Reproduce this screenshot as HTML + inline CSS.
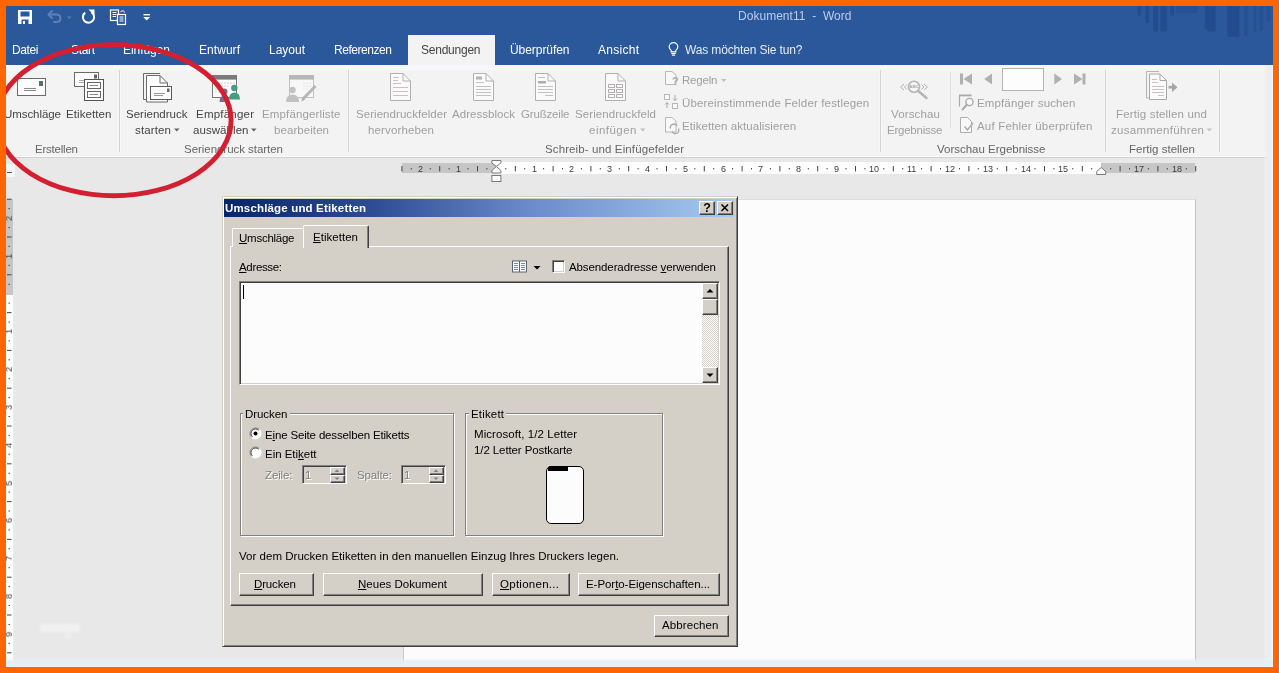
<!DOCTYPE html>
<html lang="de">
<head>
<meta charset="utf-8">
<title>Dokument11 - Word</title>
<style>
*{box-sizing:border-box;margin:0;padding:0}
html,body{width:1279px;height:673px;overflow:hidden}
body{position:relative;background:#e8e8e8;font-family:"Liberation Sans",sans-serif;}
.a{position:absolute}
.t{position:absolute;white-space:nowrap;will-change:transform;line-height:20px;height:20px;font-family:"Liberation Sans",sans-serif}
.t u{text-decoration:underline;text-underline-offset:1px}
#hdr{left:0;top:0;width:1279px;height:64.5px;background:#2a589b}
#acttab{left:408px;top:35px;width:86.6px;height:30px;background:#f3f3f3}
#ribbon{left:0;top:64.5px;width:1279px;height:93px;background:linear-gradient(180deg,#f4f8fd 0,#f6f9fc 3.5px,#f4f3f3 6px,#f3f3f3 100%);border-bottom:1px solid #d0d0d0;box-shadow:inset 0 -1px 0 #fbfbfb}
.sep{position:absolute;top:70px;width:1px;height:82px;background:#d3d3d3;box-shadow:1px 0 0 #f8f8f8,-1px 0 0 #f6f6f6}
#page{left:403px;top:199px;width:793px;height:480px;background:#fcfcfc;border-right:1px solid #c4c4c4;border-left:1px solid #c8c8c8;border-top:1px solid #dedede}
/* dialog */
#dlg{left:221.5px;top:196px;width:516.5px;height:450.5px;background:#d4d0c8;border:1px solid;border-color:#d4d0c8 #404040 #404040 #d4d0c8;box-shadow:inset 1px 1px 0 #fff,inset -1px -1px 0 #808080}
#dtitle{left:224px;top:199px;width:509.5px;height:18px;background:linear-gradient(90deg,#0a246a 0%,#2f4e95 30%,#6b8bcb 60%,#a6caf0 100%)}
.tbtn{position:absolute;top:200.5px;width:16px;height:14px;background:#d4d0c8;border:1px solid;border-color:#fff #404040 #404040 #fff;box-shadow:inset -1px -1px 0 #808080;font-weight:bold;font-size:11px;line-height:11px;text-align:center;color:#000}
.raised{position:absolute;background:#d4d0c8;border:1px solid;border-color:#fff #404040 #404040 #fff;box-shadow:inset -1px -1px 0 #808080}
.sunken{position:absolute;border:1px solid;border-color:#808080 #fff #fff #808080;box-shadow:inset 1px 1px 0 #404040,inset -1px -1px 0 #d4d0c8}
.group{position:absolute;border:1px solid #808080;box-shadow:1px 1px 0 #fff, inset 1px 1px 0 #fff}
.gcap{position:absolute;background:#d4d0c8;height:8px}
#frame{left:0;top:0;width:1279px;height:673px;border:6px solid #ff6600;border-bottom-width:6px;pointer-events:none}
</style>
</head>
<body>
<!-- ===== Word header ===== -->
<div class="a" id="hdr"></div>
<svg class="a" style="left:1130px;top:6px" width="143" height="36" viewBox="1130 6 143 36">
 <g fill="#1c4281" opacity="0.5">
  <rect x="1137.700" y="6" width="3.600" height="9.500"/><rect x="1145.500" y="6" width="3.600" height="17"/><rect x="1153.200" y="6" width="4.800" height="25.500"/><rect x="1160.300" y="6" width="6.600" height="25.500"/><rect x="1170.400" y="6" width="3.600" height="9.500"/>
  <rect x="1176" y="6" width="22" height="7" opacity=".5"/>
  <path d="M1204.900 6 H1215.600 V31.500 H1210 Q1204.900 31.500 1204.900 26 Z"/>
  <rect x="1227.500" y="6" width="12" height="31"/>
  <rect x="1244" y="6" width="3.700" height="29.500" opacity=".7"/><rect x="1253.700" y="6" width="2.600" height="26" opacity=".7"/><rect x="1259.600" y="6" width="3.600" height="25" opacity=".7"/><rect x="1266.700" y="6" width="3.600" height="15.500" opacity=".7"/>
 </g>
</svg>
<div class="a" id="acttab"></div>
<div class="a" id="ribbon"></div>
<!-- ===== Quick access toolbar + bulb ===== -->
<svg class="a" style="left:0;top:0" width="1279" height="65" viewBox="0 0 1279 65">
 <!-- save -->
 <g>
  <path d="M18 10 H32 V24 H18 Z" fill="#fff"/>
  <rect x="20.5" y="11.5" width="9" height="5" fill="#2a589b"/>
  <rect x="21.5" y="19.5" width="7" height="4.5" fill="#2a589b"/>
  <rect x="23" y="21" width="2" height="3" fill="#fff"/>
 </g>
 <!-- undo (disabled) -->
 <g fill="none" stroke="#5f7fb6" stroke-width="2" stroke-linecap="round" stroke-linejoin="round">
  <path d="M48.5 14.5 H56 Q60.5 14.5 60.5 18.5 Q60.5 22 56 22 H54"/>
  <path d="M52 11 L48.5 14.5 L52 18"/>
 </g>
 <path d="M67 16.5 H71.5 L69.25 19 Z" fill="#5f7fb6"/>
 <!-- redo/repeat -->
 <g fill="none" stroke="#fff" stroke-width="2">
  <path d="M91.5 12.4 A5.6 5.6 0 1 1 85.2 12.6"/>
 </g>
 <path d="M88.5 9.5 H94.5 V15.5 Z" fill="#fff"/>
 <!-- docs -->
 <g fill="#2a589b" stroke="#fff" stroke-width="1.2">
  <rect x="110.5" y="10" width="8" height="10.5"/>
  <rect x="117.5" y="14.5" width="8" height="10"/>
 </g>
 <g stroke="#fff" stroke-width="1" fill="none">
  <path d="M112.5 12.5 H116.5 M112.5 14.5 H116.5 M112.5 16.5 H116 M119.5 17 H123.5 M119.5 19 H123.5 M119.5 21 H123.5"/>
  <path d="M120.5 11.5 Q123.5 9.5 125 12.5" />
 </g>
 <!-- dropdown -->
 <rect x="143.5" y="14" width="6.5" height="1.4" fill="#fff"/>
 <path d="M143.2 17 H150.2 L146.7 20.6 Z" fill="#fff"/>
 <!-- bulb -->
 <g fill="none" stroke="#fff" stroke-width="1.2">
  <path d="M671.200 51.800 V50.400 Q669.200 48.600 669.200 46.900 A4.300 4.300 0 0 1 677.800 46.900 Q677.800 48.600 675.800 50.400 V51.800 Z"/>
  <path d="M671.300 53.500 H675.700 M671.900 55.100 H675.100"/>
 </g>
</svg>

<!-- ===== Ribbon icons ===== -->
<svg class="a" style="left:0;top:64px" width="1279" height="94" viewBox="0 64 1279 94">
 <!-- Umschlaege -->
 <g>
  <rect x="17.5" y="78.5" width="28" height="17" fill="#fdfdfd" stroke="#6a6a6a" stroke-width="1"/>
  <rect x="39" y="81" width="4" height="5" fill="#55706a"/>
  <path d="M24 88.5 H36 M24 90.5 H36" stroke="#8a8a8a" stroke-width="1"/>
 </g>
 <!-- Etiketten -->
 <g>
  <rect x="74.5" y="72.5" width="24" height="14" fill="#fdfdfd" stroke="#6a6a6a"/>
  <rect x="94" y="74.5" width="3" height="4" fill="#666"/>
  <path d="M79 80.500 H90 M79 82.500 H88" stroke="#aaa"/>
  <rect x="84.500" y="79.500" width="19" height="21" fill="#fdfdfd" stroke="#555"/>
  <rect x="87.500" y="82.500" width="13" height="6" fill="#fff" stroke="#666"/>
  <rect x="87.500" y="91.500" width="13" height="6" fill="#fff" stroke="#666"/>
  <path d="M89.500 85.500 H98 M89.500 94.500 H98" stroke="#888"/>
 </g>
 <!-- Seriendruck starten -->
 <g>
  <path d="M160 73.500 H143.500 V99.500 H146" fill="none" stroke="#6a6a6a"/>
  <path d="M146.500 75.500 H160 L167.500 83 V102 H146.500 Z" fill="#fdfdfd" stroke="#6a6a6a"/>
  <path d="M160 75.500 V83 H167.500" fill="none" stroke="#6a6a6a"/>
  <rect x="150.500" y="86.500" width="21" height="13" fill="#fdfdfd" stroke="#5a5a5a"/>
  <rect x="167" y="88.500" width="2.500" height="3.500" fill="#666"/>
  <path d="M154 93.500 H165 M154 95.500 H163" stroke="#999"/>
 </g>
 <!-- Empfaenger auswaehlen -->
 <g>
  <rect x="212.500" y="75.500" width="24" height="22" fill="#fdfdfd" stroke="#777"/>
  <rect x="212" y="75" width="25" height="4.600" fill="#7a7a7a"/>
  <g fill="#9a9a9a"><circle cx="216" cy="83" r=".6"/><circle cx="219" cy="83" r=".6"/><circle cx="222" cy="83" r=".6"/><circle cx="225" cy="83" r=".6"/><circle cx="228" cy="83" r=".6"/><circle cx="231" cy="83" r=".6"/><circle cx="234" cy="83" r=".6"/>
  <circle cx="216" cy="86" r=".6"/><circle cx="219" cy="86" r=".6"/><circle cx="222" cy="86" r=".6"/><circle cx="225" cy="86" r=".6"/><circle cx="228" cy="86" r=".6"/>
  <circle cx="216" cy="89" r=".6"/><circle cx="219" cy="89" r=".6"/><circle cx="216" cy="92" r=".6"/><circle cx="219" cy="92" r=".6"/></g>
  <circle cx="224.500" cy="91.500" r="3" fill="#7b6a9a"/>
  <path d="M219.500 102 Q219.500 95.500 224.500 95.500 Q229.500 95.500 229.500 102 Z" fill="#7b6a9a"/>
  <circle cx="234.300" cy="88" r="3.200" fill="#4a9a80"/>
  <path d="M229 99.500 Q229 92.500 234.500 92.500 Q240 92.500 240 99.500 Z" fill="#4a9a80"/>
 </g>
 <!-- Empfaengerliste bearbeiten (disabled) -->
 <g opacity=".8">
  <rect x="289.500" y="75.500" width="24" height="22" fill="#fafafa" stroke="#b4b4b4"/>
  <rect x="289" y="75" width="25" height="4.600" fill="#a9a9a9"/>
  <g fill="#c4c4c4"><circle cx="304" cy="83" r=".6"/><circle cx="307" cy="83" r=".6"/><circle cx="310" cy="83" r=".6"/><circle cx="304" cy="86" r=".6"/><circle cx="307" cy="86" r=".6"/><circle cx="310" cy="86" r=".6"/><circle cx="304" cy="89" r=".6"/><circle cx="307" cy="89" r=".6"/></g>
  <circle cx="292.500" cy="90" r="3.200" fill="#b7b7b7"/>
  <path d="M286 102 Q286 94.500 292.500 94.500 Q299 94.500 299 102 Z" fill="#b7b7b7"/>
  <path d="M302.500 99.500 L315.500 86" stroke="#a8a8a8" stroke-width="3"/>
  <path d="M301 101.500 L303 98 L304.800 99.800 Z" fill="#999"/>
 </g>
 <!-- doc icons (disabled) -->
 <g fill="#fbfafa" stroke="#b0b0b0">
  <path d="M390.500 73.500 H403 L410.500 81 V100.500 H390.500 Z"/><path d="M403 73.500 V81 H410.500" fill="none"/>
  <path d="M473.500 73.500 H486 L493.500 81 V100.500 H473.500 Z"/><path d="M486 73.500 V81 H493.500" fill="none"/>
  <path d="M535.500 73.500 H548 L555.500 81 V100.500 H535.500 Z"/><path d="M548 73.500 V81 H555.500" fill="none"/>
  <path d="M605.500 73.500 H618 L625.500 81 V100.500 H605.500 Z"/><path d="M618 73.500 V81 H625.500" fill="none"/>
 </g>
 <g stroke="#d2bcc6" fill="none">
  <path d="M393 77.500 H399 M393 80.500 H398 M393 83.500 H401 M393 87.500 H408 M393 91.500 H408 M393 95.500 H408"/>
 </g>
 <g stroke="#c4c0c4" fill="none">
  <path d="M476 82.500 H484 M476 86.500 H491 M476 89.500 H491 M476 92.500 H491 M476 95.500 H491"/>
  <path d="M538 77.500 H545 M538 86.500 H553 M538 89.500 H553 M538 92.500 H553 M545 95.500 H553"/>
 </g>
 <rect x="476" y="76.500" width="6" height="3" fill="#b4b4b4"/>
 <rect x="538" y="81" width="8" height="2.500" fill="#adadad"/>
 <g fill="none" stroke="#b4b0b4">
  <rect x="608.500" y="84.500" width="6" height="3"/><rect x="616.500" y="84.500" width="6" height="3"/>
  <rect x="608.500" y="89.500" width="6" height="3"/><rect x="616.500" y="89.500" width="6" height="3"/>
  <rect x="608.500" y="94.500" width="6" height="3"/><rect x="616.500" y="94.500" width="6" height="3"/>
 </g>
 <!-- small icons (disabled) -->
 <g fill="none" stroke="#b8b8b8">
  <path d="M665.500 71.500 H672 L676 75 V84.500 H665.500 Z" fill="#f8f8f8"/>
  <text x="675.200" y="84.600" font-family="Liberation Sans, sans-serif" font-size="10.500" font-weight="bold" text-anchor="middle" fill="#a8a8a8" stroke="none">?</text>
  <rect x="664.500" y="94.500" width="5" height="5" fill="#f8f8f8"/><rect x="672.500" y="103.500" width="5" height="5" fill="#f8f8f8"/>
  <path d="M675 95 V100.500 M673 98.500 L675 100.500 L677 98.500 M667 108 V102.500 M665 104.500 L667 102.500 L669 104.500" stroke="#a8a8a8"/>
  <path d="M665.500 117.500 H672 L676 121 V132 H665.500 Z" fill="#f8f8f8"/>
  <path d="M670.500 128.500 A3.500 3.500 0 0 1 677 126 M678.500 128.500 A3.500 3.500 0 0 1 672 131.500" stroke="#a8a8a8" stroke-width="1.300"/>
 </g>
 <!-- Vorschau Ergebnisse icon -->
 <g fill="none" stroke="#b4b4b4">
  <circle cx="914" cy="86.700" r="5.500" stroke-width="1.600" fill="#f6f6f6"/>
  <text x="914" y="88.300" font-family="Liberation Sans, sans-serif" font-size="4.300" font-weight="bold" text-anchor="middle" fill="#a8a8a8" stroke="none">ABC</text>
  <path d="M918.200 91 L926.500 98" stroke-width="2.400" stroke-linecap="round"/>
  <path d="M904 84 L900.500 87 L904 90 M907 84.500 L904.500 87 L907 89.500 M924 84 L927.500 87 L924 90 M921.500 84.500 L924 87 L921.500 89.500" stroke-width="1"/>
 </g>
 <!-- navigation -->
 <g fill="#b0b0b0">
  <rect x="960" y="73.500" width="3" height="11"/><path d="M972 73.500 V84.500 L963.500 79 Z"/>
  <path d="M992 73.500 V84.500 L984.200 79 Z"/>
  <path d="M1054.300 73.500 V84.500 L1062 79 Z"/>
  <path d="M1074 73.500 V84.500 L1082.500 79 Z"/><rect x="1082.500" y="73.500" width="3" height="11"/>
 </g>
 <rect x="1002.500" y="68.500" width="41" height="22" fill="#fdfdfd" stroke="#b4b4b4"/>
 <!-- Empfaenger suchen icon -->
 <g fill="none" stroke="#aaa">
  <path d="M959.500 106.500 V95.500 H971" stroke-width="1.200"/>
  <rect x="959" y="94.500" width="12.500" height="1.800" fill="#aaa" stroke="none"/>
  <circle cx="969.500" cy="102" r="3.600" stroke-width="1.400" fill="#f8f8f8"/>
  <path d="M966.800 104.800 L962.500 109.500" stroke-width="2" stroke-linecap="round"/>
 </g>
 <!-- Auf Fehler ueberpruefen icon -->
 <g fill="none" stroke="#aeaeae">
  <path d="M960.500 117.500 H967.500 L971.500 121.500 V132.500 H960.500 Z" fill="#f8f8f8"/>
  <path d="M964.500 126.500 L967.300 130 L973 123" stroke-width="1.500"/>
 </g>
 <!-- Fertig stellen icon -->
 <g>
  <path d="M1159 71.500 H1146.500 V98 H1149" fill="none" stroke="#b4b4b4"/>
  <path d="M1149.500 74 H1160 L1166.500 80.500 V99.500 H1149.500 Z" fill="#fbfafa" stroke="#a8a8a8"/>
  <path d="M1160 74 V80.500 H1166.500" fill="none" stroke="#a8a8a8"/>
  <path d="M1152 79.500 H1157 M1152 82.500 H1158 M1152 86.500 H1164 M1152 89.500 H1164 M1152 92.500 H1164 M1158 95.500 H1164" stroke="#d2bcc6" fill="none"/>
  <path d="M1168.500 87.200 H1175" stroke="#a6a6a6" stroke-width="2.600"/>
  <path d="M1172 82.500 L1177.500 87.200 L1172 92 Z" fill="#a6a6a6"/>
 </g>
 <!-- dropdown arrows -->
 <g fill="#666">
  <path d="M174 128.500 H179.600 L176.800 131.500 Z"/>
  <path d="M251 128.500 H256.600 L253.800 131.500 Z"/>
 </g>
 <g fill="#c2c2c2">
  <path d="M640 128.500 H645.600 L642.800 131.500 Z"/>
  <path d="M721 79 H726.600 L723.800 82 Z"/>
  <path d="M1206.500 128.500 H1212.100 L1209.300 131.500 Z"/>
 </g>
</svg>

<div class="sep" style="left:119px"></div>
<div class="sep" style="left:348px"></div>
<div class="sep" style="left:880px"></div>
<div class="sep" style="left:1105px"></div>
<div class="a" style="left:950px;top:72px;width:1px;height:56px;background:#e0e0e0"></div>
<div class="sep" style="left:1219px"></div>
<!-- ===== Rulers ===== -->
<div class="a" style="left:402px;top:163px;width:94.5px;height:10px;background:#c6c6c6"></div>
<div class="a" style="left:496.4px;top:161.5px;width:604.5px;height:12.5px;background:#fdfdfd"></div>
<div class="a" style="left:1100.9px;top:163px;width:94.5px;height:10px;background:#c6c6c6"></div>
<svg class="a" style="left:0;top:160px" width="1279" height="24" viewBox="0 0 1279 24"><g fill="#444"><rect x="401.4" y="6" width="1" height="5.4"/><rect x="410.8" y="8" width="1" height="1.4"/><rect x="429.8" y="8" width="1" height="1.4"/><rect x="439.2" y="6" width="1" height="5.4"/><rect x="448.6" y="8" width="1" height="1.4"/><rect x="467.5" y="8" width="1" height="1.4"/><rect x="477.0" y="6" width="1" height="5.4"/><rect x="486.4" y="8" width="1" height="1.4"/><rect x="505.3" y="8" width="1" height="1.4"/><rect x="514.8" y="6" width="1" height="5.4"/><rect x="524.2" y="8" width="1" height="1.4"/><rect x="543.1" y="8" width="1" height="1.4"/><rect x="552.6" y="6" width="1" height="5.4"/><rect x="562.0" y="8" width="1" height="1.4"/><rect x="580.9" y="8" width="1" height="1.4"/><rect x="590.4" y="6" width="1" height="5.4"/><rect x="599.8" y="8" width="1" height="1.4"/><rect x="618.8" y="8" width="1" height="1.4"/><rect x="628.2" y="6" width="1" height="5.4"/><rect x="637.6" y="8" width="1" height="1.4"/><rect x="656.5" y="8" width="1" height="1.4"/><rect x="666.0" y="6" width="1" height="5.4"/><rect x="675.4" y="8" width="1" height="1.4"/><rect x="694.3" y="8" width="1" height="1.4"/><rect x="703.8" y="6" width="1" height="5.4"/><rect x="713.2" y="8" width="1" height="1.4"/><rect x="732.1" y="8" width="1" height="1.4"/><rect x="741.6" y="6" width="1" height="5.4"/><rect x="751.0" y="8" width="1" height="1.4"/><rect x="769.9" y="8" width="1" height="1.4"/><rect x="779.4" y="6" width="1" height="5.4"/><rect x="788.8" y="8" width="1" height="1.4"/><rect x="807.8" y="8" width="1" height="1.4"/><rect x="817.2" y="6" width="1" height="5.4"/><rect x="826.6" y="8" width="1" height="1.4"/><rect x="845.5" y="8" width="1" height="1.4"/><rect x="855.0" y="6" width="1" height="5.4"/><rect x="864.4" y="8" width="1" height="1.4"/><rect x="883.3" y="8" width="1" height="1.4"/><rect x="892.8" y="6" width="1" height="5.4"/><rect x="902.2" y="8" width="1" height="1.4"/><rect x="921.1" y="8" width="1" height="1.4"/><rect x="930.6" y="6" width="1" height="5.4"/><rect x="940.0" y="8" width="1" height="1.4"/><rect x="958.9" y="8" width="1" height="1.4"/><rect x="968.4" y="6" width="1" height="5.4"/><rect x="977.8" y="8" width="1" height="1.4"/><rect x="996.8" y="8" width="1" height="1.4"/><rect x="1006.2" y="6" width="1" height="5.4"/><rect x="1015.6" y="8" width="1" height="1.4"/><rect x="1034.5" y="8" width="1" height="1.4"/><rect x="1044.0" y="6" width="1" height="5.4"/><rect x="1053.4" y="8" width="1" height="1.4"/><rect x="1072.3" y="8" width="1" height="1.4"/><rect x="1081.8" y="6" width="1" height="5.4"/><rect x="1091.2" y="8" width="1" height="1.4"/><rect x="1110.2" y="8" width="1" height="1.4"/><rect x="1119.6" y="6" width="1" height="5.4"/><rect x="1129.0" y="8" width="1" height="1.4"/><rect x="1147.9" y="8" width="1" height="1.4"/><rect x="1157.4" y="6" width="1" height="5.4"/><rect x="1166.8" y="8" width="1" height="1.4"/><rect x="1185.8" y="8" width="1" height="1.4"/><rect x="1195.2" y="6" width="1" height="5.4"/></g><g fill="#fcfcfc" stroke="#7a7a7a" stroke-width="1"><path d="M491.9 0.5 L500.9 0.5 L500.9 3 L496.4 6.5 L491.9 3 Z"/><path d="M496.4 6.5 L500.9 10.5 L500.9 13 L491.9 13 L491.9 10.5 Z"/><rect x="491.9" y="15.5" width="9" height="6"/><path d="M1101.2 7.5 L1105.7 11.5 L1105.7 14.5 L1096.7 14.5 L1096.7 11.5 Z"/></g></svg>
<div class="a" style="left:6px;top:164px;width:9px;height:13px;background:#f6f6f6"></div>
<div class="a" style="left:7px;top:171.5px;width:5px;height:1.5px;background:#555"></div>
<div class="a" style="left:6px;top:199px;width:6.5px;height:95.5px;background:#c6c6c6"></div>
<div class="a" style="left:6px;top:294.5px;width:7px;height:373px;background:#fdfdfd;box-shadow:1.5px 0 0 #ecebe4"></div>
<svg class="a" style="left:6px;top:190px" width="8" height="480" viewBox="6 190 8 480"><g fill="#444"><rect x="7" y="198.7" width="4.5" height="1"/><rect x="8.5" y="208.1" width="1.4" height="1"/><rect x="8.5" y="227.1" width="1.4" height="1"/><rect x="7" y="236.5" width="4.5" height="1"/><rect x="8.5" y="245.9" width="1.4" height="1"/><rect x="8.5" y="264.8" width="1.4" height="1"/><rect x="7" y="274.3" width="4.5" height="1"/><rect x="8.5" y="283.8" width="1.4" height="1"/><rect x="8.5" y="302.6" width="1.4" height="1"/><rect x="7" y="312.1" width="4.5" height="1"/><rect x="8.5" y="321.6" width="1.4" height="1"/><rect x="8.5" y="340.4" width="1.4" height="1"/><rect x="7" y="349.9" width="4.5" height="1"/><rect x="8.5" y="359.3" width="1.4" height="1"/><rect x="8.5" y="378.2" width="1.4" height="1"/><rect x="7" y="387.7" width="4.5" height="1"/><rect x="8.5" y="397.1" width="1.4" height="1"/><rect x="8.5" y="416.0" width="1.4" height="1"/><rect x="7" y="425.5" width="4.5" height="1"/><rect x="8.5" y="434.9" width="1.4" height="1"/><rect x="8.5" y="453.8" width="1.4" height="1"/><rect x="7" y="463.3" width="4.5" height="1"/><rect x="8.5" y="472.8" width="1.4" height="1"/><rect x="8.5" y="491.6" width="1.4" height="1"/><rect x="7" y="501.1" width="4.5" height="1"/><rect x="8.5" y="510.5" width="1.4" height="1"/><rect x="8.5" y="529.4" width="1.4" height="1"/><rect x="7" y="538.9" width="4.5" height="1"/><rect x="8.5" y="548.3" width="1.4" height="1"/><rect x="8.5" y="567.2" width="1.4" height="1"/><rect x="7" y="576.7" width="4.5" height="1"/><rect x="8.5" y="586.1" width="1.4" height="1"/><rect x="8.5" y="605.0" width="1.4" height="1"/><rect x="7" y="614.5" width="4.5" height="1"/><rect x="8.5" y="624.0" width="1.4" height="1"/><rect x="8.5" y="642.8" width="1.4" height="1"/><rect x="7" y="652.3" width="4.5" height="1"/><rect x="8.5" y="661.8" width="1.4" height="1"/></g></svg>

<div class="a" id="page"></div>
<!-- ===== Dialog ===== -->
<div class="a" id="dlg"></div>
<div class="a" id="dtitle"></div>
<div class="tbtn" style="left:699px"><span style="display:block;font-family:'Liberation Sans',sans-serif;font-weight:bold;font-size:12.5px;line-height:12px;margin-top:0.5px;will-change:transform">?</span></div>
<div class="tbtn" style="left:717px"><svg width="14" height="12" viewBox="0 0 14 12" style="display:block"><path d="M3.500 2.500 L10 9 M10 2.500 L3.500 9" stroke="#000" stroke-width="1.500" fill="none"/></svg></div>
<!-- tab panel -->
<div class="a" style="left:230px;top:246px;width:499px;height:359.5px;background:#d4d0c8;border:1px solid;border-color:#fff #404040 #404040 #fff;box-shadow:inset -1px -1px 0 #808080"></div>
<!-- tabs -->
<div class="a" style="left:232px;top:227.5px;width:71.5px;height:19px;background:#d4d0c8;border:1px solid;border-color:#fff #808080 transparent #fff;border-bottom:0;border-radius:2px 2px 0 0"></div>
<div class="a" style="left:302.5px;top:225px;width:66.5px;height:22.5px;background:#d4d0c8;border:1px solid;border-color:#fff #404040 #d4d0c8 #fff;border-bottom:0;border-radius:2px 2px 0 0;box-shadow:inset -1px 0 0 #808080"></div>
<!-- address book icon -->
<svg class="a" style="left:511px;top:259px" width="32" height="16" viewBox="0 0 32 16">
 <rect x="1.5" y="2" width="14" height="11" fill="#fdfdfd" stroke="#5a6470" stroke-width="1"/>
 <line x1="8.5" y1="2" x2="8.5" y2="13" stroke="#5a6470" stroke-width="1"/>
 <g stroke="#7a8796" stroke-width="1"><line x1="3" y1="4.5" x2="7" y2="4.5"/><line x1="3" y1="6.5" x2="7" y2="6.5"/><line x1="3" y1="8.5" x2="7" y2="8.5"/><line x1="3" y1="10.5" x2="7" y2="10.5"/><line x1="10" y1="4.5" x2="14" y2="4.5"/><line x1="10" y1="6.5" x2="14" y2="6.5"/><line x1="10" y1="8.5" x2="14" y2="8.5"/><line x1="10" y1="10.5" x2="14" y2="10.5"/></g>
 <path d="M22.5 7 L29.5 7 L26 10.5 Z" fill="#000"/>
</svg>
<!-- checkbox -->
<div class="sunken" style="left:552px;top:260px;width:13px;height:13px;background:#fdfdfd"></div>
<!-- textbox -->
<div class="sunken" style="left:239px;top:281px;width:480.5px;height:103.5px;background:#fcfcfc"></div>
<div class="a" style="left:243px;top:285px;width:1px;height:14px;background:#000"></div>
<!-- scrollbar -->
<div class="a" style="left:702px;top:283px;width:16px;height:99.5px;background:#ece9e4;background-image:repeating-conic-gradient(#d4d0c8 0% 25%, #ffffff 0% 50%);background-size:2px 2px"></div>
<div class="raised" style="left:702px;top:283px;width:16px;height:16px"><svg width="14" height="14" viewBox="0 0 14 14" style="display:block"><path d="M3.5 8.5 L10.5 8.5 L7 5 Z" fill="#000"/></svg></div>
<div class="raised" style="left:702px;top:299px;width:16px;height:16px"></div>
<div class="raised" style="left:702px;top:366.5px;width:16px;height:16px"><svg width="14" height="14" viewBox="0 0 14 14" style="display:block"><path d="M3.5 5.5 L10.5 5.5 L7 9 Z" fill="#000"/></svg></div>
<!-- groups -->
<div class="group" style="left:239.500px;top:412.5px;width:214.5px;height:123.5px"></div>
<div class="gcap" style="left:243px;top:409px;width:46.5px"></div>
<div class="group" style="left:464.5px;top:412.5px;width:198.5px;height:123.5px"></div>
<div class="gcap" style="left:469px;top:409px;width:37px"></div>
<!-- radios -->
<svg class="a" style="left:249px;top:427.3px" width="13" height="13" viewBox="0 0 13 13">
 <circle cx="6.5" cy="6.5" r="5.5" fill="#fdfdfd"/>
 <path d="M2.6 10.4 A5.5 5.5 0 0 1 10.4 2.6" fill="none" stroke="#808080" stroke-width="1"/>
 <path d="M3.3 9.7 A4.5 4.5 0 0 1 9.7 3.3" fill="none" stroke="#404040" stroke-width="1"/>
 <path d="M10.4 2.6 A5.5 5.5 0 0 1 2.6 10.4" fill="none" stroke="#fff" stroke-width="1"/>
 <circle cx="6.5" cy="6.5" r="2" fill="#000"/>
</svg>
<svg class="a" style="left:249px;top:446.3px" width="13" height="13" viewBox="0 0 13 13">
 <circle cx="6.5" cy="6.5" r="5.5" fill="#fdfdfd"/>
 <path d="M2.6 10.4 A5.5 5.5 0 0 1 10.4 2.6" fill="none" stroke="#808080" stroke-width="1"/>
 <path d="M3.3 9.7 A4.5 4.5 0 0 1 9.7 3.3" fill="none" stroke="#404040" stroke-width="1"/>
 <path d="M10.4 2.6 A5.5 5.5 0 0 1 2.6 10.4" fill="none" stroke="#fff" stroke-width="1"/>
</svg>
<!-- spin boxes -->
<div class="sunken" style="left:301.5px;top:465px;width:45px;height:19px;background:#d4d0c8"></div>
<div class="raised" style="left:330px;top:467px;width:14.5px;height:8px"><svg width="12" height="6" viewBox="0 0 12 6" style="display:block"><path d="M3.5 4 L8.5 4 L6 1.5 Z" fill="#808080"/></svg></div>
<div class="raised" style="left:330px;top:475px;width:14.5px;height:7.5px"><svg width="12" height="6" viewBox="0 0 12 6" style="display:block"><path d="M3.5 1.5 L8.5 1.5 L6 4 Z" fill="#808080"/></svg></div>
<div class="sunken" style="left:400.5px;top:465px;width:45px;height:19px;background:#d4d0c8"></div>
<div class="raised" style="left:429px;top:467px;width:14.5px;height:8px"><svg width="12" height="6" viewBox="0 0 12 6" style="display:block"><path d="M3.5 4 L8.5 4 L6 1.5 Z" fill="#808080"/></svg></div>
<div class="raised" style="left:429px;top:475px;width:14.5px;height:7.5px"><svg width="12" height="6" viewBox="0 0 12 6" style="display:block"><path d="M3.5 1.5 L8.5 1.5 L6 4 Z" fill="#808080"/></svg></div>
<!-- label preview -->
<div class="a" style="left:546px;top:466px;width:37.5px;height:57.5px;background:#fcfcfc;border:1px solid #000;border-radius:5px"></div>
<div class="a" style="left:547.5px;top:466px;width:20px;height:4.5px;border-radius:3px 0 0 0;background:#000"></div>
<!-- buttons -->
<div class="raised" style="left:239px;top:573px;width:74.5px;height:22.5px"></div>
<div class="raised" style="left:322.5px;top:573px;width:160.5px;height:22.5px"></div>
<div class="raised" style="left:492px;top:573px;width:77.5px;height:22.5px"></div>
<div class="raised" style="left:577.5px;top:573px;width:142.5px;height:22.5px"></div>
<div class="raised" style="left:654px;top:614.5px;width:74.5px;height:22px"></div>

<div class="a" style="left:40px;top:623.5px;width:40px;height:8px;background:rgba(255,255,255,.38);filter:blur(1.2px);border-radius:2px"></div>
<div class="a" style="left:64px;top:632px;width:8px;height:7px;background:rgba(255,255,255,.2);filter:blur(1px)"></div>
<div class="t" style="left:738px;top:6.34px;font-size:12px;color:#b9cdee;letter-spacing:0.031px;">Dokument11  -  Word</div>
<div class="t" style="left:12px;top:39.84px;font-size:12px;color:#ffffff;letter-spacing:-0.379px;">Datei</div>
<div class="t" style="left:71px;top:39.84px;font-size:12px;color:#ffffff;letter-spacing:-0.336px;">Start</div>
<div class="t" style="left:123px;top:39.84px;font-size:12px;color:#ffffff;letter-spacing:-0.054px;">Einfügen</div>
<div class="t" style="left:199px;top:39.84px;font-size:12px;color:#ffffff;letter-spacing:0.052px;">Entwurf</div>
<div class="t" style="left:269px;top:39.84px;font-size:12px;color:#ffffff;letter-spacing:-0.006px;">Layout</div>
<div class="t" style="left:334px;top:39.84px;font-size:12px;color:#ffffff;letter-spacing:-0.450px;">Referenzen</div>
<div class="t" style="left:421px;top:39.84px;font-size:12px;color:#444444;letter-spacing:-0.238px;">Sendungen</div>
<div class="t" style="left:510px;top:39.84px;font-size:12px;color:#ffffff;letter-spacing:-0.061px;">Überprüfen</div>
<div class="t" style="left:598px;top:39.84px;font-size:12px;color:#ffffff;letter-spacing:0.273px;">Ansicht</div>
<div class="t" style="left:685px;top:39.84px;font-size:12px;color:#e6ecf5;letter-spacing:-0.146px;">Was möchten Sie tun?</div>
<div class="t" style="left:4px;top:103.52px;font-size:11.5px;color:#444444;letter-spacing:-0.066px;">Umschläge</div>
<div class="t" style="left:66px;top:103.52px;font-size:11.5px;color:#444444;letter-spacing:0.094px;">Etiketten</div>
<div class="t" style="left:126px;top:103.52px;font-size:11.5px;color:#444444;letter-spacing:0.013px;">Seriendruck</div>
<div class="t" style="left:135px;top:119.62px;font-size:11.5px;color:#444444;letter-spacing:0.138px;">starten</div>
<div class="t" style="left:196px;top:103.52px;font-size:11.5px;color:#444444;letter-spacing:0.217px;">Empfänger</div>
<div class="t" style="left:193px;top:119.62px;font-size:11.5px;color:#444444;letter-spacing:0.064px;">auswählen</div>
<div class="t" style="left:262px;top:103.52px;font-size:11.5px;color:#a0a0a0;letter-spacing:0.137px;">Empfängerliste</div>
<div class="t" style="left:274px;top:119.62px;font-size:11.5px;color:#a0a0a0;letter-spacing:0.071px;">bearbeiten</div>
<div class="t" style="left:356px;top:103.52px;font-size:11.5px;color:#a0a0a0;letter-spacing:0.054px;">Seriendruckfelder</div>
<div class="t" style="left:368px;top:119.62px;font-size:11.5px;color:#a0a0a0;letter-spacing:0.142px;">hervorheben</div>
<div class="t" style="left:452px;top:103.52px;font-size:11.5px;color:#a0a0a0;letter-spacing:0.036px;">Adressblock</div>
<div class="t" style="left:521px;top:103.52px;font-size:11.5px;color:#a0a0a0;letter-spacing:-0.170px;">Grußzeile</div>
<div class="t" style="left:575px;top:103.52px;font-size:11.5px;color:#a0a0a0;letter-spacing:0.078px;">Seriendruckfeld</div>
<div class="t" style="left:589px;top:119.62px;font-size:11.5px;color:#a0a0a0;letter-spacing:0.482px;">einfügen</div>
<div class="t" style="left:891px;top:103.52px;font-size:11.5px;color:#a0a0a0;letter-spacing:0.150px;">Vorschau</div>
<div class="t" style="left:887px;top:119.62px;font-size:11.5px;color:#a0a0a0;letter-spacing:-0.239px;">Ergebnisse</div>
<div class="t" style="left:1116px;top:103.52px;font-size:11.5px;color:#a0a0a0;letter-spacing:0.164px;">Fertig stellen und</div>
<div class="t" style="left:1111px;top:119.62px;font-size:11.5px;color:#a0a0a0;letter-spacing:0.319px;">zusammenführen</div>
<div class="t" style="left:682px;top:70.32px;font-size:11.5px;color:#a0a0a0;letter-spacing:-0.191px;">Regeln</div>
<div class="t" style="left:682px;top:93.32px;font-size:11.5px;color:#a0a0a0;letter-spacing:0.157px;">Übereinstimmende Felder festlegen</div>
<div class="t" style="left:682px;top:116.32px;font-size:11.5px;color:#a0a0a0;letter-spacing:0.077px;">Etiketten aktualisieren</div>
<div class="t" style="left:977px;top:93.32px;font-size:11.5px;color:#a0a0a0;letter-spacing:0.130px;">Empfänger suchen</div>
<div class="t" style="left:977px;top:116.32px;font-size:11.5px;color:#a0a0a0;letter-spacing:0.181px;">Auf Fehler überprüfen</div>
<div class="t" style="left:35px;top:139.02px;font-size:11.5px;color:#666666;letter-spacing:-0.219px;">Erstellen</div>
<div class="t" style="left:184px;top:139.02px;font-size:11.5px;color:#666666;letter-spacing:-0.040px;">Seriendruck starten</div>
<div class="t" style="left:545px;top:139.02px;font-size:11.5px;color:#666666;letter-spacing:0.113px;">Schreib- und Einfügefelder</div>
<div class="t" style="left:937px;top:139.02px;font-size:11.5px;color:#666666;letter-spacing:-0.010px;">Vorschau Ergebnisse</div>
<div class="t" style="left:1129px;top:139.02px;font-size:11.5px;color:#666666;letter-spacing:0.012px;">Fertig stellen</div>
<div class="t" style="left:225px;top:197.52px;font-size:11.5px;color:#ffffff;letter-spacing:0.164px;font-weight:bold;">Umschläge und Etiketten</div>
<div class="t" style="left:239px;top:227.72px;font-size:11.5px;color:#000000;letter-spacing:-0.254px;"><u>U</u>mschläge</div>
<div class="t" style="left:313px;top:226.72px;font-size:11.5px;color:#000000;letter-spacing:0.031px;"><u>E</u>tiketten</div>
<div class="t" style="left:239px;top:256.72px;font-size:11.5px;color:#000000;letter-spacing:-0.342px;"><u>A</u>dresse:</div>
<div class="t" style="left:569px;top:256.72px;font-size:11.5px;color:#000000;letter-spacing:-0.109px;">Absenderadresse <u>v</u>erwenden</div>
<div class="t" style="left:245px;top:403.52px;font-size:11.5px;color:#000000;letter-spacing:-0.055px;">Drucken</div>
<div class="t" style="left:471px;top:403.52px;font-size:11.5px;color:#000000;letter-spacing:0.172px;">Etikett</div>
<div class="t" style="left:265px;top:424.62px;font-size:11.5px;color:#000000;letter-spacing:-0.159px;">E<u>i</u>ne Seite desselben Etiketts</div>
<div class="t" style="left:265px;top:443.62px;font-size:11.5px;color:#000000;letter-spacing:-0.028px;">Ein Eti<u>k</u>ett</div>
<div class="t" style="left:265px;top:465.02px;font-size:11.5px;color:#7f7f7f;letter-spacing:-0.125px;text-shadow:1px 1px 0 #fff;">Zeile:</div>
<div class="t" style="left:357px;top:465.02px;font-size:11.5px;color:#7f7f7f;letter-spacing:-0.135px;text-shadow:1px 1px 0 #fff;">Spalte:</div>
<div class="t" style="left:305px;top:465.02px;font-size:11.5px;color:#7f7f7f;text-shadow:1px 1px 0 #fff;">1</div>
<div class="t" style="left:404px;top:465.02px;font-size:11.5px;color:#7f7f7f;text-shadow:1px 1px 0 #fff;">1</div>
<div class="t" style="left:474px;top:424.02px;font-size:11.5px;color:#000000;letter-spacing:0.069px;">Microsoft, 1/2 Letter</div>
<div class="t" style="left:474px;top:440.02px;font-size:11.5px;color:#000000;letter-spacing:-0.099px;">1/2 Letter Postkarte</div>
<div class="t" style="left:239px;top:546.02px;font-size:11.5px;color:#000000;letter-spacing:0.023px;">Vor dem Drucken Etiketten in den manuellen Einzug Ihres Druckers legen.</div>
<div class="t" style="left:254px;top:574.02px;font-size:11.5px;color:#000000;letter-spacing:-0.138px;"><u>D</u>rucken</div>
<div class="t" style="left:358px;top:574.02px;font-size:11.5px;color:#000000;letter-spacing:0.011px;"><u>N</u>eues Dokument</div>
<div class="t" style="left:500px;top:574.02px;font-size:11.5px;color:#000000;letter-spacing:0.273px;"><u>O</u>ptionen...</div>
<div class="t" style="left:586px;top:574.02px;font-size:11.5px;color:#000000;letter-spacing:-0.056px;">E-Por<u>t</u>o-Eigenschaften...</div>
<div class="t" style="left:662px;top:614.72px;font-size:11.5px;color:#000000;letter-spacing:0.109px;">Abbrechen</div>
<div class="t" style="left:418px;top:158.88px;font-size:9px;color:#3c3c3c;">2</div>
<div class="t" style="left:456px;top:158.88px;font-size:9px;color:#3c3c3c;">1</div>
<div class="t" style="left:532px;top:158.88px;font-size:9px;color:#3c3c3c;">1</div>
<div class="t" style="left:569px;top:158.88px;font-size:9px;color:#3c3c3c;">2</div>
<div class="t" style="left:607px;top:158.88px;font-size:9px;color:#3c3c3c;">3</div>
<div class="t" style="left:645px;top:158.88px;font-size:9px;color:#3c3c3c;">4</div>
<div class="t" style="left:683px;top:158.88px;font-size:9px;color:#3c3c3c;">5</div>
<div class="t" style="left:721px;top:158.88px;font-size:9px;color:#3c3c3c;">6</div>
<div class="t" style="left:758px;top:158.88px;font-size:9px;color:#3c3c3c;">7</div>
<div class="t" style="left:796px;top:158.88px;font-size:9px;color:#3c3c3c;">8</div>
<div class="t" style="left:834px;top:158.88px;font-size:9px;color:#3c3c3c;">9</div>
<div class="t" style="left:869px;top:158.88px;font-size:9px;color:#3c3c3c;">10</div>
<div class="t" style="left:907px;top:158.88px;font-size:9px;color:#3c3c3c;">11</div>
<div class="t" style="left:945px;top:158.88px;font-size:9px;color:#3c3c3c;">12</div>
<div class="t" style="left:983px;top:158.88px;font-size:9px;color:#3c3c3c;">13</div>
<div class="t" style="left:1021px;top:158.88px;font-size:9px;color:#3c3c3c;">14</div>
<div class="t" style="left:1058px;top:158.88px;font-size:9px;color:#3c3c3c;">15</div>
<div class="t" style="left:1134px;top:158.88px;font-size:9px;color:#3c3c3c;">17</div>
<div class="t" style="left:1172px;top:158.88px;font-size:9px;color:#3c3c3c;">18</div>
<div class="t" style="left:6px;top:207.98px;font-size:9px;color:#3c3c3c;transform:rotate(-90deg);transform-origin:2.8px 10px;">2</div>
<div class="t" style="left:6px;top:245.78px;font-size:9px;color:#3c3c3c;transform:rotate(-90deg);transform-origin:2.8px 10px;">1</div>
<div class="t" style="left:6px;top:321.38px;font-size:9px;color:#3c3c3c;transform:rotate(-90deg);transform-origin:2.8px 10px;">1</div>
<div class="t" style="left:6px;top:359.18px;font-size:9px;color:#3c3c3c;transform:rotate(-90deg);transform-origin:2.8px 10px;">2</div>
<div class="t" style="left:6px;top:396.98px;font-size:9px;color:#3c3c3c;transform:rotate(-90deg);transform-origin:2.8px 10px;">3</div>
<div class="t" style="left:6px;top:434.78px;font-size:9px;color:#3c3c3c;transform:rotate(-90deg);transform-origin:2.8px 10px;">4</div>
<div class="t" style="left:6px;top:472.58px;font-size:9px;color:#3c3c3c;transform:rotate(-90deg);transform-origin:2.8px 10px;">5</div>
<div class="t" style="left:6px;top:510.38px;font-size:9px;color:#3c3c3c;transform:rotate(-90deg);transform-origin:2.8px 10px;">6</div>
<div class="t" style="left:6px;top:548.18px;font-size:9px;color:#3c3c3c;transform:rotate(-90deg);transform-origin:2.8px 10px;">7</div>
<div class="t" style="left:6px;top:585.98px;font-size:9px;color:#3c3c3c;transform:rotate(-90deg);transform-origin:2.8px 10px;">8</div>
<div class="t" style="left:6px;top:623.78px;font-size:9px;color:#3c3c3c;transform:rotate(-90deg);transform-origin:2.8px 10px;">9</div>
<!-- ===== red marker ellipse ===== -->
<svg class="a" style="left:0;top:30px" width="250" height="180" viewBox="0 30 250 180">
 <ellipse cx="113.800" cy="120.300" rx="117.300" ry="75.500" fill="none" stroke="#d41f30" stroke-width="4.900"/>
</svg>

<div class="a" style="left:1263px;top:64.5px;width:10px;height:603px;background:linear-gradient(90deg,rgba(252,236,226,0) 0%,rgba(252,236,226,.7) 25%,rgba(228,238,250,.95) 48%,#e6f0fb 82%,#fdf3ea 100%)"></div>
<div class="a" style="left:6px;top:658px;width:1267px;height:9px;background:linear-gradient(180deg,rgba(240,240,236,0) 0%,rgba(244,240,232,.5) 18%,rgba(226,238,250,.92) 40%,rgba(228,240,252,.92) 80%,#fdeee2 100%)"></div>
<div class="a" id="frame"></div>
</body>
</html>
